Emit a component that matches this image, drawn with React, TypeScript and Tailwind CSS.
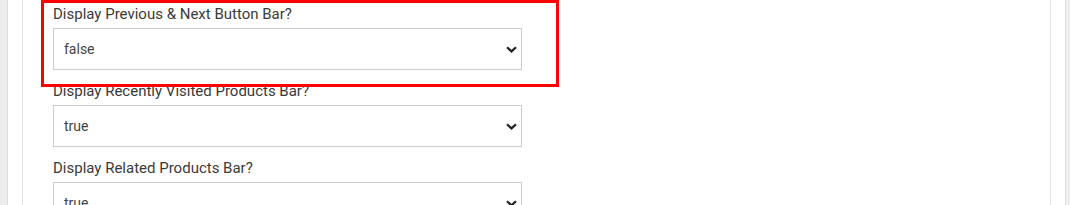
import React from 'react';

const fields = [
  { label: 'Display Previous & Next Button Bar?', value: 'false' },
  { label: 'Display Recently Visited Products Bar?', value: 'true' },
  { label: 'Display Related Products Bar?', value: 'true' },
];

function Chevron() {
  return (
    <svg width="11" height="7" viewBox="0 0 11 7" className="shrink-0">
      <path d="M1 1.2 L5.5 5.4 L10 1.2" fill="none" stroke="#222" strokeWidth="2.2" strokeLinejoin="miter" />
    </svg>
  );
}

export default function App() {
  return (
    <div className="h-[205px] overflow-hidden bg-[#eeeeee] pl-[7px] pr-[4px]" style={{ fontFamily: 'Roboto, "Liberation Sans", sans-serif' }}>
      <div className="h-full border-x border-[#dddddd] bg-white px-[14px]">
        <div className="relative h-full border-x border-[#e2e2e2] bg-white pl-[30px] pt-[4px]">
          {fields.map((f) => (
            <div key={f.label} className="mb-[11px]">
              <div className="mb-[4px] text-[15px] leading-[20px] text-[#3a3a3a]">{f.label}</div>
              <div className="flex h-[42px] w-[469px] items-center justify-between border border-[#cccccc] bg-white pl-[10px] pr-[4px] text-[14px] text-[#444444]">
                <span>{f.value}</span>
                <Chevron />
              </div>
            </div>
          ))}
          <div className="absolute left-[18px] top-0 h-[87px] w-[518px] border-[3px] border-[#ff0000]" />
        </div>
      </div>
    </div>
  );
}
